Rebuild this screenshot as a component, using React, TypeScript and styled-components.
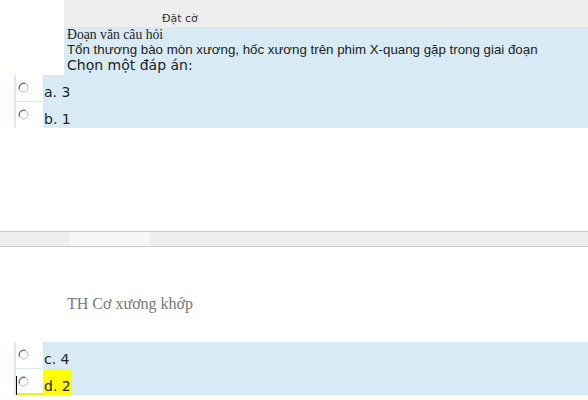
import styled, { createGlobalStyle } from "styled-components";

const GlobalStyle = createGlobalStyle`
  html, body {
    margin: 0;
    padding: 0;
    background: #ffffff;
  }
`;

const Radio = () => (
  <svg width="11" height="11" viewBox="0 0 11 11">
    <circle cx="5.5" cy="5.5" r="4.5" fill="#fdfdfd" stroke="#b8b8b8" strokeWidth="1" />
    <path d="M1.6 7.4 A4.5 4.5 0 0 1 7.4 1.6" fill="none" stroke="#777777" strokeWidth="1.3" />
  </svg>
);

type AnswerProps = { label: string; marked?: boolean; caret?: boolean };

const Answer = ({ label, marked, caret }: AnswerProps) => (
  <Row>
    <RadioCell $marked={marked}>
      {caret && <Caret />}
      <Radio />
    </RadioCell>
    <Label $marked={marked}>{label}</Label>
  </Row>
);

export default function App() {
  return (
    <>
      <GlobalStyle />
      <Page>
        <FlagBar>Đặt cờ</FlagBar>
        <QuestionText>
          <SerifLine>Đoạn văn câu hỏi</SerifLine>
          <SansLine>Tổn thương bào mòn xương, hốc xương trên phim X-quang gặp trong giai đoạn</SansLine>
          <Prompt>Chọn một đáp án:</Prompt>
        </QuestionText>
        <AnswerList>
          <Answer label="a. 3" />
          <Answer label="b. 1" />
        </AnswerList>
        <Divider>
          <DividerTab />
        </Divider>
        <CourseTitle>TH Cơ xương khớp</CourseTitle>
        <AnswerList>
          <Answer label="c. 4" />
          <Answer label="d. 2" marked caret />
        </AnswerList>
      </Page>
    </>
  );
}

const Page = styled.div`
  width: 588px;
  height: 400px;
  overflow: hidden;
  background: #ffffff;
  display: flex;
  flex-direction: column;
`;

const FlagBar = styled.div`
  margin-left: 64px;
  height: 27px;
  box-sizing: border-box;
  padding: 12px 0 0 98px;
  background: #eeeeee;
  font-family: "DejaVu Sans", Verdana, sans-serif;
  font-size: 11px;
  line-height: 13px;
  color: #333333;
`;

const QuestionText = styled.div`
  margin-left: 64px;
  padding: 1px 0 0 3px;
  height: 47px;
  background: #d8eaf4;
  color: #222222;
`;

const SerifLine = styled.div`
  font-family: "Liberation Serif", "Times New Roman", serif;
  font-size: 13.7px;
  line-height: 14px;
`;

const SansLine = styled.div`
  font-family: "Liberation Sans", Arial, sans-serif;
  font-size: 13.3px;
  line-height: 15px;
`;

const Prompt = styled.div`
  font-family: "DejaVu Sans", Verdana, sans-serif;
  font-size: 14px;
  line-height: 17px;
`;

const AnswerList = styled.div`
  margin-left: 14px;
  background: #d8eaf4;
  display: flex;
  flex-direction: column;
  gap: 1px;
  padding: 0 0 0 2px;
`;

const Row = styled.div`
  display: flex;
  align-items: stretch;
  height: 26px;
`;

const RadioCell = styled.div<{ $marked?: boolean }>`
  position: relative;
  width: 27px;
  box-sizing: border-box;
  background: #ffffff;
  padding: 4px 0 0 2px;
  border-bottom: 2px solid ${(p) => (p.$marked ? "#f7f200" : "#ffffff")};
`;

const Caret = styled.span`
  position: absolute;
  left: 0;
  top: 7px;
  bottom: -2px;
  width: 1px;
  background: #000000;
`;

const Label = styled.div<{ $marked?: boolean }>`
  display: flex;
  align-items: flex-end;
  padding: 0 1px 1px 1px;
  background: ${(p) => (p.$marked ? "#ffff00" : "transparent")};
  font-family: "DejaVu Sans", Verdana, sans-serif;
  font-size: 14px;
  line-height: 16px;
  color: #222222;
`;

const Divider = styled.div`
  margin-top: 103px;
  height: 14px;
  border-top: 1px solid #c8c8c8;
  border-bottom: 1px solid #c8c8c8;
  background: #eeeeee;
  display: flex;
  padding-left: 69px;
`;

const DividerTab = styled.div`
  width: 81px;
  background: #f6f6f6;
`;

const CourseTitle = styled.div`
  height: 95px;
  box-sizing: border-box;
  padding: 48px 0 0 67px;
  font-family: "Liberation Serif", "Times New Roman", serif;
  font-size: 16px;
  line-height: 18px;
  color: #777777;
`;
